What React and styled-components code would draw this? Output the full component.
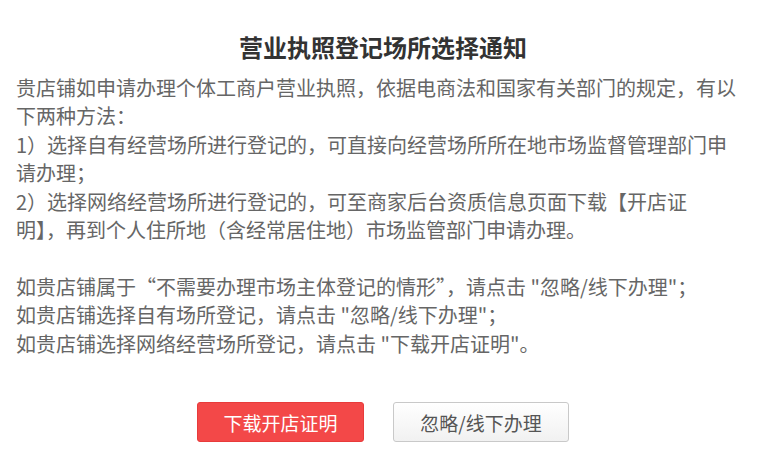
import React from "react";
import styled, { createGlobalStyle } from "styled-components";

const GlobalStyle = createGlobalStyle`
  html, body {
    margin: 0;
    padding: 0;
    background: #fff;
  }
  body {
    font-family: "Noto Sans CJK SC", "Noto Sans", sans-serif;
  }
`;

const Dialog = styled.div`
  width: 766px;
  height: 466px;
  box-sizing: border-box;
  padding: 30px 10px 0 16px;
  display: flex;
  flex-direction: column;
`;

const Title = styled.h1`
  margin: 0 0 10px;
  font-size: 24px;
  line-height: 34px;
  font-weight: 700;
  color: #333;
  text-align: center;
  padding-right: 6px;
`;

const Body = styled.div`
  font-size: 20px;
  line-height: 28.4px;
  color: #666;
  white-space: nowrap;
`;

const Para = styled.p`
  margin: 0;
`;

const Blank = styled.div`
  height: 28.4px;
`;

const Actions = styled.div`
  margin-top: 44px;
  display: flex;
  justify-content: center;
  gap: 29px;
  padding-right: 6px;
`;

const Button = styled.button`
  height: 40px;
  width: ${(p) => (p.$primary ? "167px" : "176px")};
  box-sizing: border-box;
  border-radius: 3px;
  font-family: inherit;
  font-size: 19px;
  cursor: pointer;
  border: 1px solid ${(p) => (p.$primary ? "#e83b3b" : "#c9c9c9")};
  background: ${(p) =>
    p.$primary ? "#f34848" : "linear-gradient(#ffffff, #f1f1f1)"};
  color: ${(p) => (p.$primary ? "#fff" : "#555")};
`;

export default function App() {
  return (
    <>
      <GlobalStyle />
      <Dialog>
        <Title>营业执照登记场所选择通知</Title>
        <Body>
          <Para>
            贵店铺如申请办理个体工商户营业执照，依据电商法和国家有关部门的规定，有以
            <br />
            下两种方法：
          </Para>
          <Para>
            1）选择自有经营场所进行登记的，可直接向经营场所所在地市场监督管理部门申
            <br />
            请办理；
          </Para>
          <Para>
            2）选择网络经营场所进行登记的，可至商家后台资质信息页面下载【开店证
            <br />
            明】，再到个人住所地（含经常居住地）市场监管部门申请办理。
          </Para>
          <Blank />
          <Para>如贵店铺属于“不需要办理市场主体登记的情形”，请点击 "忽略/线下办理"；</Para>
          <Para>如贵店铺选择自有场所登记，请点击 "忽略/线下办理"；</Para>
          <Para>如贵店铺选择网络经营场所登记，请点击 "下载开店证明"。</Para>
        </Body>
        <Actions>
          <Button $primary>下载开店证明</Button>
          <Button>忽略/线下办理</Button>
        </Actions>
      </Dialog>
    </>
  );
}
